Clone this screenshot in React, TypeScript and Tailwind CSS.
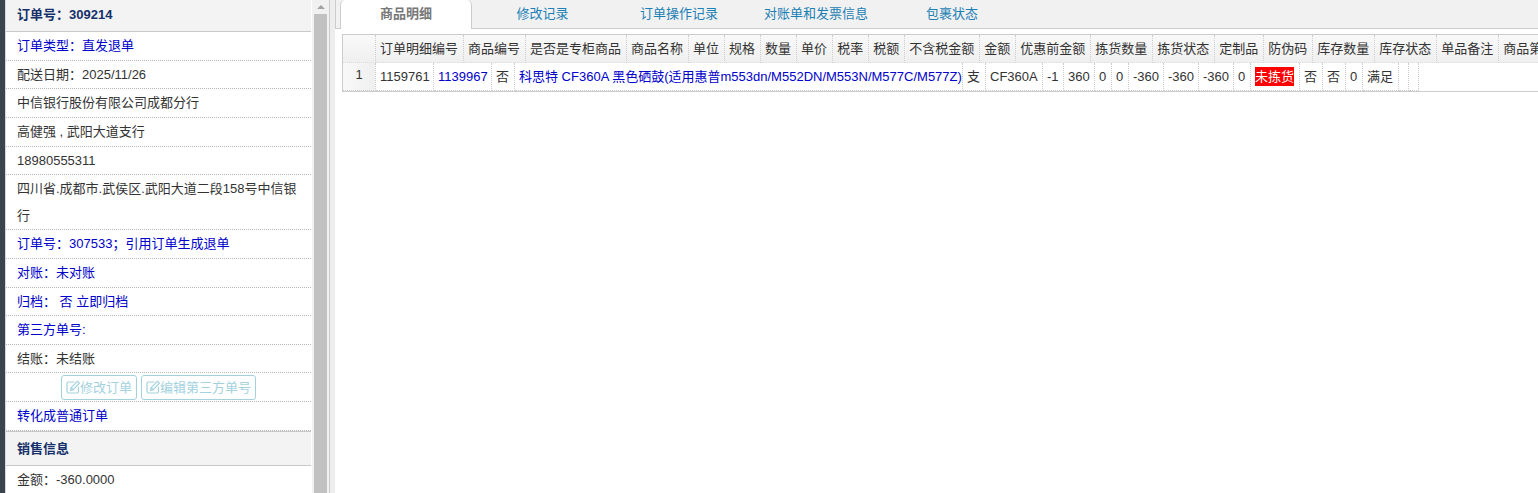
import { useState } from "react"

type Row = { text: string; link?: boolean; className: string }

const orderRows: Row[] = [
    { text: "订单类型：直发退单", link: true, className: "h-[29px]" },
    { text: "配送日期：2025/11/26", className: "h-7" },
    { text: "中信银行股份有限公司成都分行", className: "h-[29px]" },
    { text: "高健强 , 武阳大道支行", className: "h-[29px]" },
    { text: "18980555311", className: "h-7" },
    { text: "四川省.成都市.武侯区.武阳大道二段158号中信银行", className: "min-h-7" },
    { text: "订单号：307533；引用订单生成退单", link: true, className: "h-[29px]" },
    { text: "对账：未对账", link: true, className: "h-[29px]" },
    { text: "归档：\u00a0否 立即归档", link: true, className: "h-7" },
    { text: "第三方单号:", link: true, className: "h-[29px]" },
    { text: "结账：未结账", className: "h-7" },
]

const tabs = [
    { name: "商品明细", className: "w-[132px]" },
    { name: "修改记录", className: "w-[141px]" },
    { name: "订单操作记录", className: "w-[132px]" },
    { name: "对账单和发票信息", className: "w-[142px]" },
    { name: "包裹状态", className: "w-[130px]" },
]

const headers = [
    "订单明细编号", "商品编号", "是否是专柜商品", "商品名称", "单位", "规格", "数量", "单价", "税率", "税额",
    "不含税金额", "金额", "优惠前金额", "拣货数量", "拣货状态", "定制品", "防伪码", "库存数量", "库存状态",
    "单品备注", "商品第三方编号",
]

const cells = [
    { value: "1159761", width: 58 },
    { value: "1139967", width: 58, link: true },
    { value: "否", width: 23 },
    { value: "科思特 CF360A 黑色硒鼓(适用惠普m553dn/M552DN/M553N/M577C/M577Z)", width: 448, link: true },
    { value: "支", width: 23 },
    { value: "CF360A", width: 57 },
    { value: "-1", width: 21 },
    { value: "360", width: 31 },
    { value: "0", width: 17 },
    { value: "0", width: 17 },
    { value: "-360", width: 35 },
    { value: "-360", width: 35 },
    { value: "-360", width: 35 },
    { value: "0", width: 17 },
    { value: "未拣货", width: 49, alert: true },
    { value: "否", width: 23 },
    { value: "否", width: 23 },
    { value: "0", width: 17 },
    { value: "满足", width: 36 },
    { value: "", width: 10 },
    { value: "", width: 10 },
]

function EditIcon() {
    return (
        <svg viewBox="0 0 14 14" className="size-[14px]" fill="none" stroke="currentColor" strokeWidth="1.2" strokeLinecap="round" strokeLinejoin="round" aria-hidden="true">
            <path d="M8 2H2.500Q1 2 1 3.500v8Q1 13 2.500 13h8.500q1.500 0 1.500-1.500V7" />
            <path d="M4.500 10.500l.5-2.700L11.500 1.200l2 2-6.500 6.600ZM5.200 7.800l1.900 1.900" />
        </svg>
    )
}

function ActionButton({ label }: { label: string }) {
    return (
        <button type="button" className="flex h-[25px] items-center rounded-[3px] border border-[#a3d2de] px-1 text-[#a3d2de]">
            <EditIcon />
            {label}
        </button>
    )
}

function SectionTitle({ text, className }: { text: string; className: string }) {
    return (
        <h2 className={`flex items-center border-b border-[#c8c8c8] bg-[#f3f3f3] pl-[11px] font-bold text-[#15306a] ${className}`}>{text}</h2>
    )
}

function OrderPanel() {
    return (
        <aside className="w-[305px] shrink-0 leading-[27px]">
            <SectionTitle text="订单号：309214" className="h-8 pb-[3px]" />
            <ul>
                {orderRows.map((row) => (
                    <li key={row.text} className={`border-b border-dotted border-[#b8b8b8] pr-2 pl-[11px] ${row.className}`}>
                        {row.link ? <a href="#" className="text-[#0000cc]">{row.text}</a> : row.text}
                    </li>
                ))}
                <li className="flex h-[29px] items-center justify-center gap-1 border-b border-dotted border-[#b8b8b8]">
                    <ActionButton label="修改订单" />
                    <ActionButton label="编辑第三方单号" />
                </li>
                <li className="h-[29px] border-b border-dotted border-[#b8b8b8] pl-[11px]">
                    <a href="#" className="text-[#0000cc]">转化成普通订单</a>
                </li>
            </ul>
            <SectionTitle text="销售信息" className="h-[35px] border-t" />
            <p className="pl-[11px]">金额：-360.0000</p>
        </aside>
    )
}

function Scrollbar() {
    return (
        <div className="ml-px flex w-[17px] shrink-0 flex-col items-center bg-[#f1f1f1]" aria-hidden="true">
            <div className="flex h-[14px] items-center">
                <svg viewBox="0 0 8 4" className="h-1 w-2"><path d="M0 4 4 0l4 4Z" fill="#a3a3a3" /></svg>
            </div>
            <div className="w-[13px] flex-1 bg-[#c1c1c1]" />
        </div>
    )
}

function App() {
    const [active, setActive] = useState<string>("商品明细");

    return (
        <div className="flex h-screen overflow-hidden bg-white font-['Liberation_Sans','Noto_Sans_CJK_SC',sans-serif] text-[13px] text-[#333]">
            <div className="w-[6px] shrink-0 border-r border-[#d5d9dd] bg-[#3a434e]" />
            <OrderPanel />
            <Scrollbar />
            <div className="w-[6px] shrink-0 border-l border-[#ccc] bg-[#ededed]" />
            <main className="min-w-0 flex-1 overflow-hidden">
                <nav className="flex h-[29px] border-b border-l border-[#ccc] bg-[#f1f1f1] pl-1" role="tablist">
                    {tabs.map((tab) => (
                        <button
                            key={tab.name}
                            type="button"
                            role="tab"
                            aria-selected={active === tab.name}
                            className={`pb-px text-center ${tab.className} ${active === tab.name ? "h-[29px] rounded-t-[5px] border-x border-[#ccc] bg-white font-bold text-[#777]" : "h-7 text-[#1c80b5]"}`}
                            onClick={() => setActive(tab.name)}
                        >
                            {tab.name}
                        </button>
                    ))}
                </nav>
                <div className="mt-[5px] ml-[7px] border-y border-l border-[#ccc] whitespace-nowrap">
                    <table className="w-full border-separate border-spacing-0 bg-linear-to-b from-[#f9f9f9] to-[#efefef]">
                        <thead>
                            <tr className="h-7">
                                <td className="w-[33px] min-w-[33px] border-r border-b border-dotted border-[#ccc] border-b-[#ddd]" />
                                {headers.map((header) => (
                                    <th key={header} scope="col" className="border-r border-b border-dotted border-[#ccc] border-b-[#ddd] py-0 pr-[5px] pl-1 text-left font-normal">{header}</th>
                                ))}
                            </tr>
                        </thead>
                    </table>
                    <table className="table-fixed border-separate border-spacing-0">
                        <colgroup>
                            <col style={{ width: 33 }} />
                            {cells.map((cell, i) => <col key={i} style={{ width: cell.width }} />)}
                        </colgroup>
                        <tbody>
                            <tr className="h-7">
                                <th scope="row" className="border-r border-b border-dotted border-[#ccc] bg-linear-to-r from-[#f9f9f9] to-[#efefef] p-0 pb-[3px] text-center font-normal">1</th>
                                {cells.map((cell, i) => (
                                    <td key={i} className="border-r border-b border-dotted border-[#ccc] py-0 pl-1">
                                        {cell.link ? (
                                            <a href="#" className="text-[#0000cc]">{cell.value}</a>
                                        ) : cell.alert ? (
                                            <span className="bg-[#f00] py-[2px] text-white">{cell.value}</span>
                                        ) : cell.value}
                                    </td>
                                ))}
                            </tr>
                        </tbody>
                    </table>
                </div>
            </main>
        </div>
    )
}

export default App
